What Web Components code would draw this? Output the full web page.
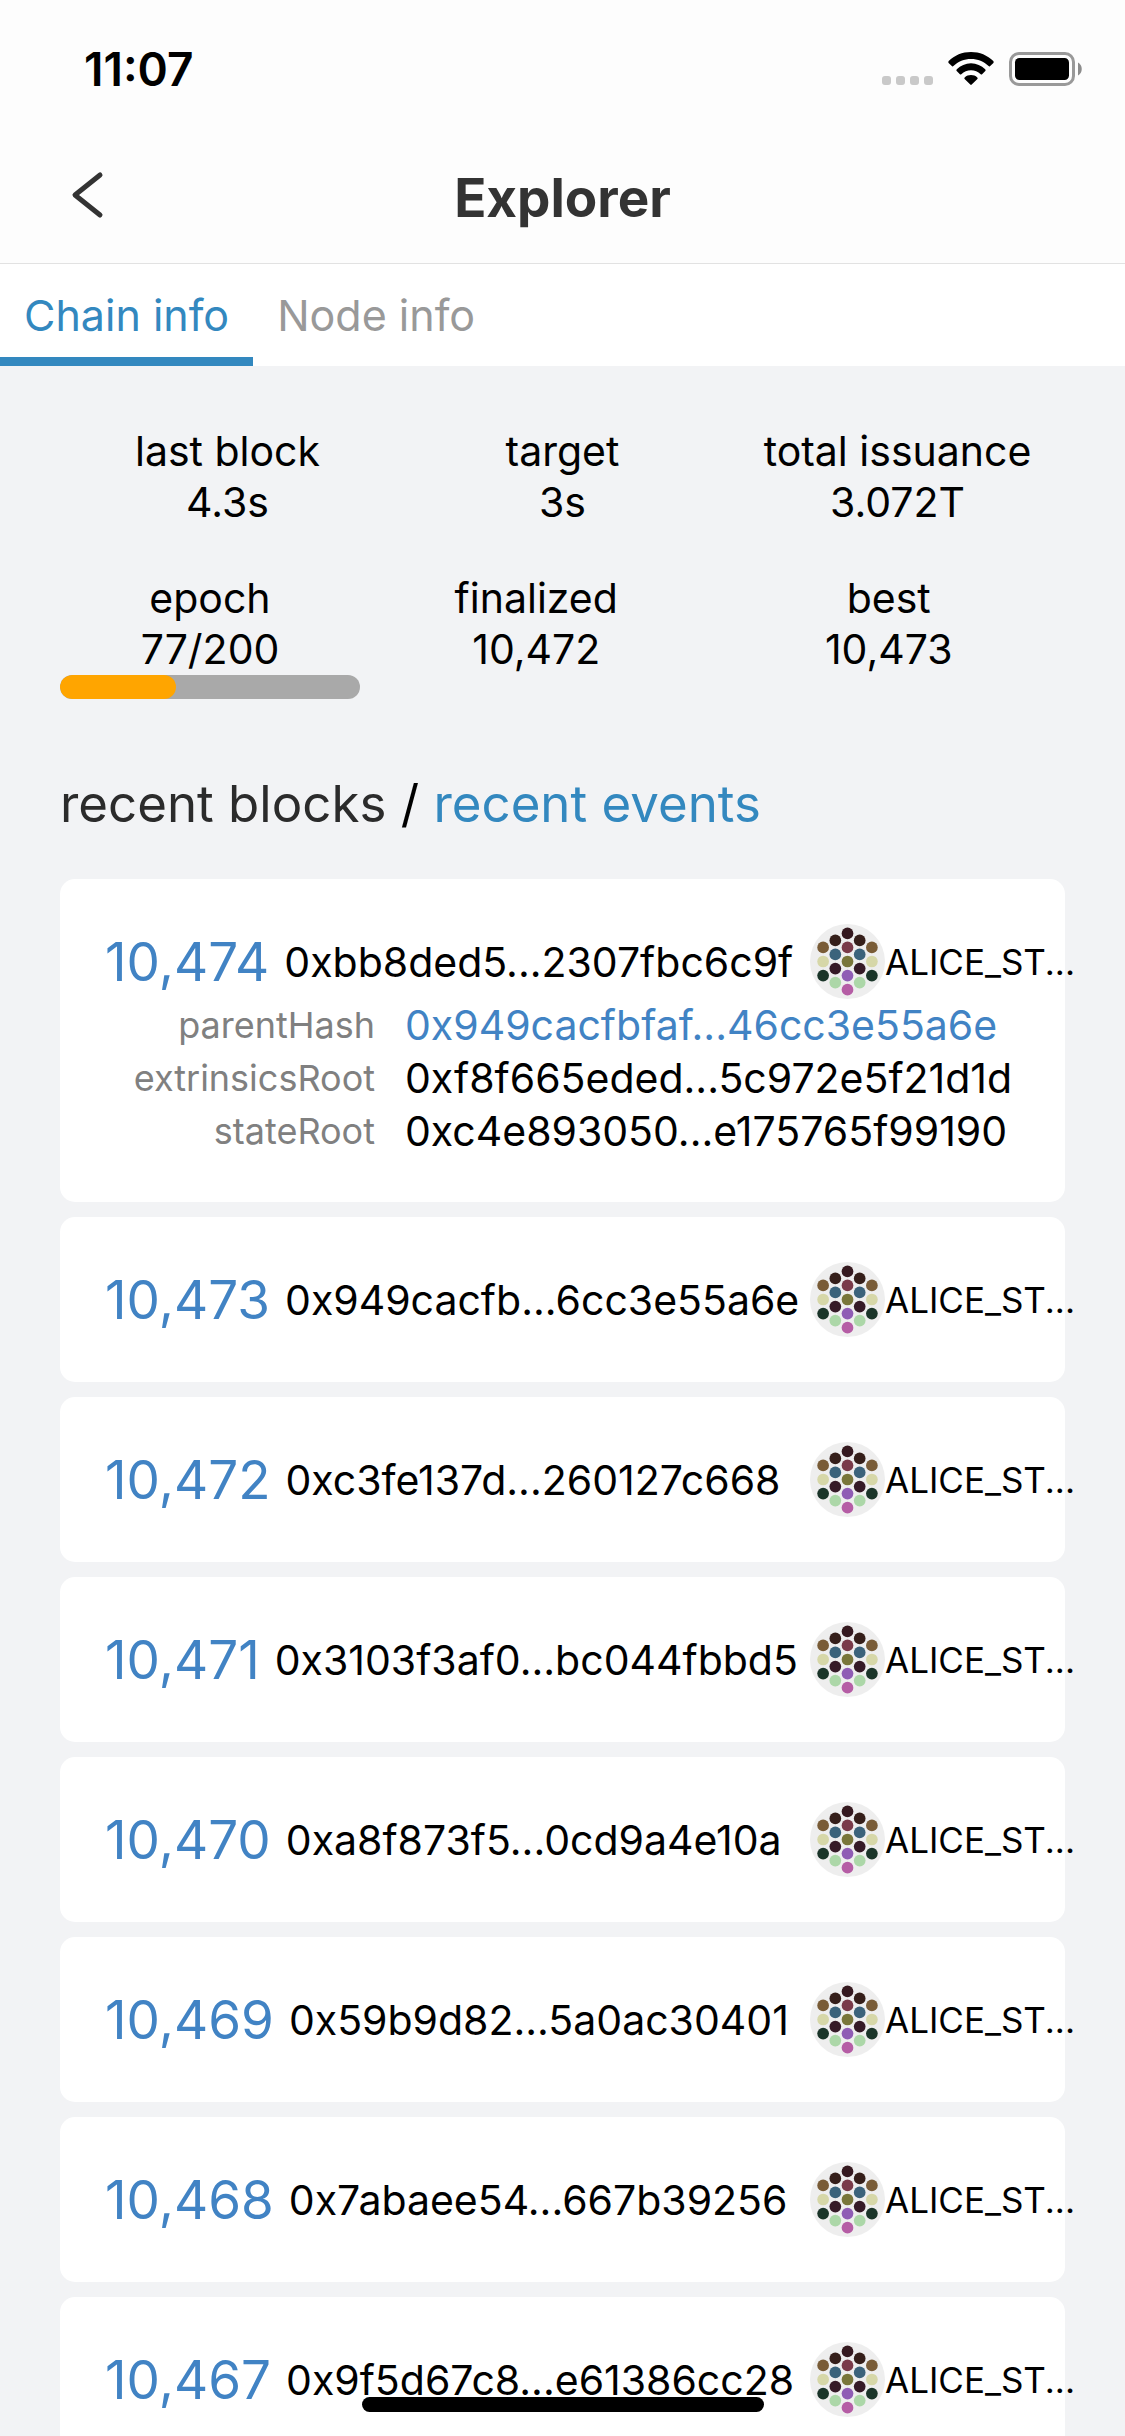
<!DOCTYPE html>
<html lang="en">
<head>
<meta charset="utf-8">
<meta name="viewport" content="width=device-width">
<title>Explorer</title>
<style>
  html, body { margin: 0; height: 100%; }
  body { font-family: Inter, "Liberation Sans", sans-serif; color: #000; background: #f2f3f5; }
</style>
</head>
<body>
<explorer-app></explorer-app>

<script>
const define = (name, html, setup) => {
  const template = document.createElement('template');
  template.innerHTML = html;
  customElements.define(name, class extends HTMLElement {
    connectedCallback() {
      if (this.shadowRoot) return;
      this.attachShadow({ mode: 'open' }).append(template.content.cloneNode(true));
      if (setup) setup(this, this.shadowRoot);
    }
  });
};

define('status-bar', `
<style>
  :host { display: flex; align-items: center; justify-content: space-between; box-sizing: border-box; height: 132px; padding: 6px 43px 0 84px; }
  time { font-size: 46px; line-height: 54px; font-weight: 600; }
  svg { display: block; }
</style>
<time>11:07</time>
<svg width="200" height="34" viewBox="0 0 200 34" role="img" aria-label="No signal, Wi-Fi on, battery full">
  <g fill="#c9c9c9"><rect x="0" y="24" width="9" height="9" rx="3"/><rect x="14" y="24" width="9" height="9" rx="3"/><rect x="28" y="24" width="9" height="9" rx="3"/><rect x="42" y="24" width="9" height="9" rx="3"/></g>
  <g fill="#000">
    <path d="M66.6 10.9 Q65.9 10 66.7 9.1 C72.5 3.3 80.3 0 89 0 C97.7 0 105.500 3.3 111.300 9.100 Q112.100 10 111.400 10.900 L107.900 14.200 Q107.300 14.700 106.600 14.100 C101.800 9.500 95.800 7 89 7 C82.200 7 76.200 9.500 71.400 14.100 Q70.700 14.700 70.100 14.200 Z"/>
    <path d="M74.700 19.100 Q73.900 18.200 74.800 17.300 C78.600 13.600 83.500 11.200 89 11.200 C94.500 11.200 99.400 13.600 103.200 17.300 Q104.100 18.200 103.300 19.100 L100.100 22.200 Q99.400 22.800 98.700 22.200 C96 19.800 92.700 18.300 89 18.300 C85.300 18.300 82 19.800 79.300 22.200 Q78.600 22.800 77.900 22.200 Z"/>
    <path d="M82.600 27 Q81.900 26.200 82.700 25.400 C84.500 23.800 86.500 23 89 23 C91.500 23 93.500 23.800 95.300 25.400 Q96.100 26.200 95.400 27 L89.700 32.600 Q89 33.300 88.300 32.600 Z"/>
  </g>
  <rect x="128.500" y="1.500" width="63" height="31" rx="8.500" fill="none" stroke="#999" stroke-width="3"/>
  <rect x="133" y="6" width="54" height="22" rx="4.500"/>
  <path d="M196 10.500 C201 13 201 21 196 23.500 Z" fill="#8c8c8c"/>
</svg>`);

define('nav-bar', `
<style>
  :host { display: grid; grid-template-columns: 1fr auto 1fr; align-items: center; box-sizing: border-box; height: 132px; padding: 0 60px; border-bottom: 1px solid #e2e2e2; color: #333; }
  button { justify-self: start; display: block; padding: 0 9px; margin: 0 0 6px; border: 0; background: none; color: inherit; }
  svg { display: block; }
  h1 { margin: 0; font-size: 53px; line-height: 64px; font-weight: 700; }
</style>
<button type="button" aria-label="Back">
  <svg width="36" height="48" viewBox="0 0 36 48" fill="none" stroke="currentColor" stroke-width="5" stroke-linecap="round" stroke-linejoin="round"><path d="M31 4 L6 24 L31 44"/></svg>
</button>
<h1><slot></slot></h1>`);

define('tab-bar', `
<style>
  :host { display: flex; background: #fff; height: 102px; }
  button { box-sizing: border-box; padding: 9px 24px 0; border: 0; border-bottom: 9px solid transparent; background: none; font: inherit; font-size: 43px; line-height: 54px; color: #999; }
  button[aria-selected="true"] { color: #3388bf; border-bottom-color: #3388bf; }
  nav { display: flex; }
</style>
<nav role="tablist"><button role="tab" aria-selected="true">Chain info</button><button role="tab" aria-selected="false">Node info</button></nav>`);

define('stat-item', `
<style>
  :host { display: flex; flex: 1; flex-direction: column; align-items: center; font-size: 41px; line-height: 51px; white-space: nowrap; }
  :host([total]) { flex: 0 0 300px; }
  .track { align-self: stretch; height: 24px; border-radius: 12px; background: #a9a9a9; overflow: hidden; }
  .fill { height: 100%; border-radius: 12px; background: #ffa500; }
  .track[hidden] { display: none; }
</style>
<span class="label"></span><slot></slot>
<div class="track" role="progressbar" hidden><div class="fill"></div></div>`,
(host, root) => {
  root.querySelector('.label').textContent = host.getAttribute('label');
  if (host.hasAttribute('total')) {
    const track = root.querySelector('.track');
    const value = +host.getAttribute('value');
    const total = +host.getAttribute('total');
    track.hidden = false;
    track.setAttribute('aria-label', host.getAttribute('label'));
    track.setAttribute('aria-valuenow', value);
    track.setAttribute('aria-valuemax', total);
    track.firstElementChild.style.width = 100 * value / total + '%';
  }
});

define('identity-icon', `
<style>:host { display: block; flex: none; } svg { display: block; }</style>
<svg width="75" height="75" viewBox="0 0 64 64" aria-hidden="true"><circle cx="32" cy="32" r="32" fill="#eee"/></svg>`,
(host, root) => {
  const dots = [
    [32, 8, '#35191f'], [32, 20, '#793a49'], [21.6, 14, '#351f1a'], [42.4, 14, '#351f1a'],
    [11.2, 20, '#795c37'], [52.8, 20, '#795c37'], [21.6, 26, '#3b637b'], [42.4, 26, '#3b637b'],
    [11.2, 32, '#d6d7a8'], [52.8, 32, '#d6d7a8'], [32, 32, '#78763a'],
    [21.6, 38, '#351a27'], [42.4, 38, '#351a27'], [11.2, 44, '#1a3529'], [52.8, 44, '#1a3529'],
    [32, 44, '#8f5db5'], [21.6, 50, '#acd7a8'], [42.4, 50, '#acd7a8'], [32, 56, '#b55da5']
  ];
  const svg = root.querySelector('svg');
  for (const [x, y, color] of dots) {
    const dot = document.createElementNS('http://www.w3.org/2000/svg', 'circle');
    dot.setAttribute('cx', x); dot.setAttribute('cy', y); dot.setAttribute('r', 5); dot.setAttribute('fill', color);
    svg.append(dot);
  }
});

define('block-card', `
<style>
  :host { display: block; padding: 45px; border-radius: 15px; background: #fff; font-size: 41px; line-height: 52px; white-space: nowrap; }
  .summary { display: flex; align-items: center; height: 75px; }
  .block { display: flex; align-items: center; gap: 15px; flex: 1; min-width: 0; }
  .number { font-size: 53px; line-height: 64px; color: #4183c4; text-decoration: none; }
  .author { display: flex; align-items: center; flex: 0 0 210px; width: 210px; font-size: 35px; }
</style>
<div class="summary">
  <div class="block"><a class="number" href="#"></a><span class="hash"></span></div>
  <div class="author"><identity-icon></identity-icon><span>ALICE_ST...</span></div>
</div>
<slot></slot>`,
(host, root) => {
  root.querySelector('.number').textContent = host.getAttribute('number');
  root.querySelector('.hash').textContent = host.getAttribute('hash');
});

define('block-details', `
<style>
  :host { display: block; }
  dl { display: grid; grid-template-columns: 270px 1fr; column-gap: 30px; row-gap: 1px; margin: 0; align-items: center; }
  dt { text-align: right; font-size: 36px; color: #808080; }
  dd { margin: 0; }
  a { color: #4183c4; text-decoration: none; }
</style>
<dl>
  <dt>parentHash</dt><dd><a href="#">0x949cacfbfaf...46cc3e55a6e</a></dd>
  <dt>extrinsicsRoot</dt><dd>0xf8f665eded...5c972e5f21d1d</dd>
  <dt>stateRoot</dt><dd>0xc4e893050...e175765f99190</dd>
</dl>`);

define('explorer-app', `
<style>
  :host { display: flex; flex-direction: column; height: 100vh; overflow: hidden; }
  header { flex: none; background: #fdfdfd; }
  tab-bar { flex: none; }
  main { flex: 1; min-height: 0; overflow-y: auto; scrollbar-width: none; padding: 60px 60px 0; }
  .stats { display: flex; margin-bottom: 45px; }
  .stats + .stats { margin-bottom: 75px; }
  h2 { margin: 0 0 45px; font-size: 51px; line-height: 60px; font-weight: 400; }
  h2 span { color: #2b2b2b; }
  h2 a { color: #3388bf; text-decoration: none; }
  .blocks { display: flex; flex-direction: column; gap: 15px; }
  .home { position: fixed; bottom: 24px; left: 50%; width: 402px; height: 15px; margin-left: -201px; border-radius: 8px; background: #000; }
</style>
<header><status-bar></status-bar><nav-bar>Explorer</nav-bar></header>
<tab-bar></tab-bar>
<main>
  <section class="stats">
    <stat-item label="last block">4.3s</stat-item>
    <stat-item label="target">3s</stat-item>
    <stat-item label="total issuance">3.072T</stat-item>
  </section>
  <section class="stats">
    <stat-item label="epoch" value="77" total="200">77/200</stat-item>
    <stat-item label="finalized">10,472</stat-item>
    <stat-item label="best">10,473</stat-item>
  </section>
  <h2><span>recent blocks</span> / <a href="#">recent events</a></h2>
  <section class="blocks">
    <block-card number="10,474" hash="0xbb8ded5...2307fbc6c9f"><block-details></block-details></block-card>
    <block-card number="10,473" hash="0x949cacfb...6cc3e55a6e"></block-card>
    <block-card number="10,472" hash="0xc3fe137d...260127c668"></block-card>
    <block-card number="10,471" hash="0x3103f3af0...bc044fbbd5"></block-card>
    <block-card number="10,470" hash="0xa8f873f5...0cd9a4e10a"></block-card>
    <block-card number="10,469" hash="0x59b9d82...5a0ac30401"></block-card>
    <block-card number="10,468" hash="0x7abaee54...667b39256"></block-card>
    <block-card number="10,467" hash="0x9f5d67c8...e61386cc28"></block-card>
  </section>
</main>
<div class="home"></div>`);
</script>
</body>
</html>
